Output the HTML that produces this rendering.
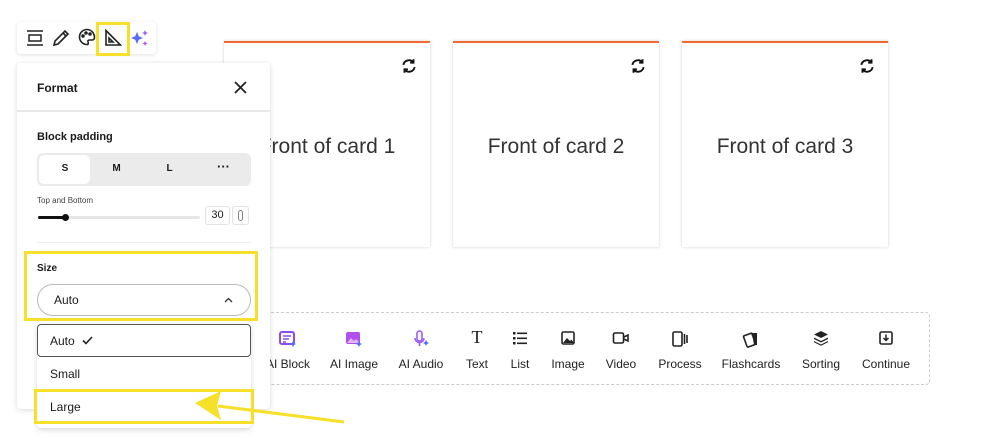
<!DOCTYPE html>
<html><head><meta charset="utf-8"><style>
*{box-sizing:border-box;margin:0;padding:0}
body{width:999px;height:447px;background:#fff;font-family:"Liberation Sans",sans-serif;position:relative;overflow:hidden;color:#1a1a1a}
.abs{position:absolute}
.card{position:absolute;top:41px;width:206px;height:206px;background:#fff;border-top:2px solid #f26a2e;box-shadow:0 0 3px rgba(0,0,0,.18);}
.card .t{position:absolute;top:92px;left:0;right:0;text-align:center;font-size:21px;color:#333}
.card svg{position:absolute;top:14px;right:12px}
.lbl{position:absolute;top:357px;font-size:12px;color:#222;white-space:nowrap;transform:translateX(-50%)}
.ic{position:absolute;top:330px;transform:translateX(-50%)}
.y{position:absolute;border:3px solid #f7e02a}
</style></head><body>

<div class="card" style="left:224px"><svg width="18" height="18" viewBox="0 0 16 16" fill="none" stroke="#111" stroke-width="1.7"><path d="M3 7a5 5 0 0 1 9-2"/><path d="M13 9a5 5 0 0 1-9 2"/><path d="M12 2v3H9"/><path d="M4 14v-3h3"/></svg><div class="t">Front of card 1</div></div>
<div class="card" style="left:453px"><svg width="18" height="18" viewBox="0 0 16 16" fill="none" stroke="#111" stroke-width="1.7"><path d="M3 7a5 5 0 0 1 9-2"/><path d="M13 9a5 5 0 0 1-9 2"/><path d="M12 2v3H9"/><path d="M4 14v-3h3"/></svg><div class="t">Front of card 2</div></div>
<div class="card" style="left:682px"><svg width="18" height="18" viewBox="0 0 16 16" fill="none" stroke="#111" stroke-width="1.7"><path d="M3 7a5 5 0 0 1 9-2"/><path d="M13 9a5 5 0 0 1-9 2"/><path d="M12 2v3H9"/><path d="M4 14v-3h3"/></svg><div class="t">Front of card 3</div></div>

<div class="abs" style="left:262px;top:312px;width:668px;height:73px;border:1px dashed #ccc;border-radius:4px"></div>
<svg class="ic" style="left:288px" width="18" height="18" viewBox="0 0 18 18"><rect x="1" y="2" width="14" height="12" rx="2" fill="none" stroke="#8a4bf0" stroke-width="2"/><path d="M4 6h8M4 9h6M4 12h3" stroke="#8a4bf0" stroke-width="1.5"/><path d="M14 11l1 2 2 1-2 1-1 2-1-2-2-1 2-1z" fill="#4f6bf5"/></svg>
<svg class="ic" style="left:354px" width="18" height="18" viewBox="0 0 18 18"><rect x="1" y="2" width="14" height="12" rx="2" fill="#b04ef0"/><path d="M2 13l4-5 3 3 2-2 4 4z" fill="#fff" opacity=".6"/><path d="M14 11l1 2 2 1-2 1-1 2-1-2-2-1 2-1z" fill="#4f6bf5"/></svg>
<svg class="ic" style="left:421px" width="18" height="18" viewBox="0 0 18 18"><rect x="5" y="1" width="5" height="10" rx="2.5" fill="none" stroke="#9a5cf5" stroke-width="1.6"/><path d="M3 8a4.5 4.5 0 0 0 9 0M7.5 13v3" fill="none" stroke="#9a5cf5" stroke-width="1.6"/><path d="M14 10l1 2 2 1-2 1-1 2-1-2-2-1 2-1z" fill="#4f6bf5"/></svg>
<div class="ic" style="left:477px;top:327px;font-family:'Liberation Serif',serif;font-size:18px">T</div>
<svg class="ic" style="left:520px" width="16" height="16" viewBox="0 0 16 16" fill="#222"><rect x="1" y="2" width="2.5" height="2.5"/><rect x="1" y="7" width="2.5" height="2.5"/><rect x="1" y="12" width="2.5" height="2.5"/><rect x="5" y="2.5" width="10" height="1.6"/><rect x="5" y="7.5" width="10" height="1.6"/><rect x="5" y="12.5" width="10" height="1.6"/></svg>
<svg class="ic" style="left:568px" width="16" height="16" viewBox="0 0 16 16"><rect x="2" y="2" width="12" height="12" rx="1.5" fill="none" stroke="#222" stroke-width="1.6"/><path d="M3 13l4-5 3 3 1.5-1.5L14 13z" fill="#222"/></svg>
<svg class="ic" style="left:621px" width="18" height="16" viewBox="0 0 18 16"><rect x="1.5" y="3" width="10" height="10" rx="1.5" fill="none" stroke="#222" stroke-width="1.6"/><path d="M12 7l4-2v6l-4-2" fill="none" stroke="#222" stroke-width="1.6"/></svg>
<svg class="ic" style="left:680px" width="18" height="18" viewBox="0 0 18 18"><rect x="2" y="2" width="9" height="14" rx="1.5" fill="none" stroke="#222" stroke-width="1.6"/><path d="M13.5 4v10M16 5v8" stroke="#222" stroke-width="1.6"/></svg>
<svg class="ic" style="left:751px" width="18" height="18" viewBox="0 0 18 18"><rect x="3" y="4" width="9" height="12" rx="1" transform="rotate(-20 8 10)" fill="none" stroke="#222" stroke-width="1.6"/><path d="M10 3h5v12h-3" fill="#222"/></svg>
<svg class="ic" style="left:821px" width="16" height="16" viewBox="0 0 16 16" fill="#222"><path d="M8 1l7 3.5-7 3.5-7-3.5z"/><path d="M1 7.5l7 3.5 7-3.5v1.5l-7 3.5-7-3.5z"/><path d="M1 11l7 3.5 7-3.5v1.3l-7 3.5-7-3.5z"/></svg>
<svg class="ic" style="left:886px" width="16" height="16" viewBox="0 0 16 16"><rect x="2" y="2" width="12" height="12" rx="1.5" fill="none" stroke="#222" stroke-width="1.6"/><path d="M8 4.5v6M5.5 8l2.5 2.5L10.5 8" fill="none" stroke="#222" stroke-width="1.5"/></svg>
<div class="lbl" style="left:288px">AI Block</div>
<div class="lbl" style="left:354px">AI Image</div>
<div class="lbl" style="left:421px">AI Audio</div>
<div class="lbl" style="left:477px">Text</div>
<div class="lbl" style="left:520px">List</div>
<div class="lbl" style="left:568px">Image</div>
<div class="lbl" style="left:621px">Video</div>
<div class="lbl" style="left:680px">Process</div>
<div class="lbl" style="left:751px">Flashcards</div>
<div class="lbl" style="left:821px">Sorting</div>
<div class="lbl" style="left:886px">Continue</div>

<div class="abs" style="left:17px;top:22px;width:139px;height:32px;background:#fff;border-radius:4px;box-shadow:0 1px 4px rgba(0,0,0,.12)"></div>
<svg class="abs" style="left:26px;top:29px" width="18" height="18" viewBox="0 0 18 18" fill="none" stroke="#222" stroke-width="1.5"><path d="M1 2h16M1 16h16"/><rect x="3" y="6" width="12" height="6"/></svg>
<svg class="abs" style="left:52px;top:29px" width="18" height="18" viewBox="0 0 18 18" fill="none" stroke="#222" stroke-width="1.6"><path d="M2 16l1-4L13 2l3 3L6 15z"/><path d="M11 4l3 3"/></svg>
<svg class="abs" style="left:78px;top:28px" width="18" height="18" viewBox="0 0 18 18" fill="none" stroke="#222" stroke-width="1.6"><path d="M9 1.5a7.5 7.5 0 1 0 0 15c1.5 0 1.5-1.5 1-2.5s0-2 1.5-2H14a2.5 2.5 0 0 0 2.5-2.5C16.5 5 13 1.5 9 1.5z"/><circle cx="5" cy="8" r="1" fill="#222"/><circle cx="8" cy="5" r="1" fill="#222"/><circle cx="12" cy="6" r="1" fill="#222"/></svg>
<svg class="abs" style="left:104px;top:29px" width="18" height="18" viewBox="0 0 18 18" fill="none" stroke="#222" stroke-width="1.6"><path d="M2 1.5v14.5h14.5z"/><path d="M5 9v4h4z"/></svg>
<svg class="abs" style="left:130px;top:28px" width="20" height="20" viewBox="0 0 20 20"><path d="M7 4l1.8 4.2L13 10l-4.2 1.8L7 16l-1.8-4.2L1 10l4.2-1.8z" fill="#5a6cf5"/><path d="M15 2l.9 2.1L18 5l-2.1.9L15 8l-.9-2.1L12 5l2.1-.9z" fill="#9a5cf5"/><path d="M15 13l.8 1.7 1.7.8-1.7.8L15 18l-.8-1.7-1.7-.8 1.7-.8z" fill="#b04ef0"/></svg>
<div class="y" style="left:96px;top:22px;width:34px;height:34px"></div>

<div class="abs" style="left:17px;top:63px;width:253px;height:346px;background:#fff;border-radius:4px;box-shadow:0 1px 6px rgba(0,0,0,.15)">
  <div class="abs" style="left:20px;top:18px;font-size:12px;font-weight:bold">Format</div>
  <svg class="abs" style="left:217px;top:18px" width="13" height="13" viewBox="0 0 13 13" stroke="#222" stroke-width="1.8"><path d="M1 1l11 11M12 1L1 12"/></svg>
  <div class="abs" style="left:0;top:47px;width:253px;height:2px;background:#e8e8e8"></div>
  <div class="abs" style="left:20px;top:68px;font-size:11px;font-weight:bold">Block padding</div>
  <div class="abs" style="left:20px;top:90px;width:214px;height:33px;background:#ebebeb;border-radius:6px">
    <div class="abs" style="left:2px;top:2px;width:51px;height:29px;background:#fff;border-radius:5px"></div>
    <div class="abs" style="left:0;top:10px;width:56px;text-align:center;font-size:10px;font-weight:bold">S</div>
    <div class="abs" style="left:53px;top:10px;width:53px;text-align:center;font-size:10px;font-weight:bold">M</div>
    <div class="abs" style="left:106px;top:10px;width:53px;text-align:center;font-size:10px;font-weight:bold">L</div>
    <div class="abs" style="left:160px;top:6px;width:53px;text-align:center;font-size:13px;font-weight:bold">···</div>
  </div>
  <div class="abs" style="left:20px;top:133px;font-size:8px;color:#444">Top and Bottom</div>
  <div class="abs" style="left:21px;top:153px;width:162px;height:3px;background:#e6e6e6;border-radius:2px"></div>
  <div class="abs" style="left:21px;top:153px;width:27px;height:3px;background:#111;border-radius:2px"></div>
  <div class="abs" style="left:45px;top:151px;width:7px;height:7px;background:#111;border-radius:50%"></div>
  <div class="abs" style="left:188px;top:143px;width:25px;height:19px;border:1px solid #e2e2e2;border-radius:3px;font-size:11px;text-align:center;line-height:17px">30</div>
  <div class="abs" style="left:215px;top:143px;width:17px;height:19px;border:1px solid #e2e2e2;border-radius:3px"></div>
  <div class="abs" style="left:221px;top:147px;width:5px;height:11px;border:1px solid #888;border-radius:3px"></div>
  <div class="abs" style="left:20px;top:179px;width:214px;height:1px;background:#eee"></div>
  <div class="abs" style="left:20px;top:200px;font-size:10px;font-weight:bold">Size</div>
  <div class="abs" style="left:20px;top:221px;width:214px;height:32px;border:1px solid #bbb;border-radius:16px">
    <div class="abs" style="left:16px;top:8px;font-size:12px">Auto</div>
    <svg class="abs" style="left:186px;top:12px" width="9" height="6" viewBox="0 0 9 6" fill="none" stroke="#333" stroke-width="1.3"><path d="M1 5l3.5-3.5L8 5"/></svg>
  </div>
</div>
<div class="y" style="left:24px;top:251px;width:234px;height:70px"></div>

<div class="abs" style="left:37px;top:324px;width:214px;height:104px;background:#fff;border-radius:4px;box-shadow:0 2px 6px rgba(0,0,0,.15)"></div>
<div class="abs" style="left:37px;top:324px;width:214px;height:33px;border:1px solid #555;border-radius:4px"></div>
<div class="abs" style="left:50px;top:334px;font-size:12px">Auto</div>
<svg class="abs" style="left:82px;top:336px" width="11" height="9" viewBox="0 0 11 9" fill="none" stroke="#222" stroke-width="1.6"><path d="M1 4.5l3 3L10 1"/></svg>
<div class="abs" style="left:50px;top:367px;font-size:12px">Small</div>
<div class="abs" style="left:50px;top:400px;font-size:12px">Large</div>
<div class="y" style="left:34px;top:389px;width:220px;height:35px"></div>

<svg class="abs" style="left:0;top:0" width="999" height="447"><path d="M344 422L218 406" stroke="#f7e02a" stroke-width="3"/><path d="M195 403l26-12-4 15 4 14z" fill="#f7e02a"/></svg>
</body></html>
